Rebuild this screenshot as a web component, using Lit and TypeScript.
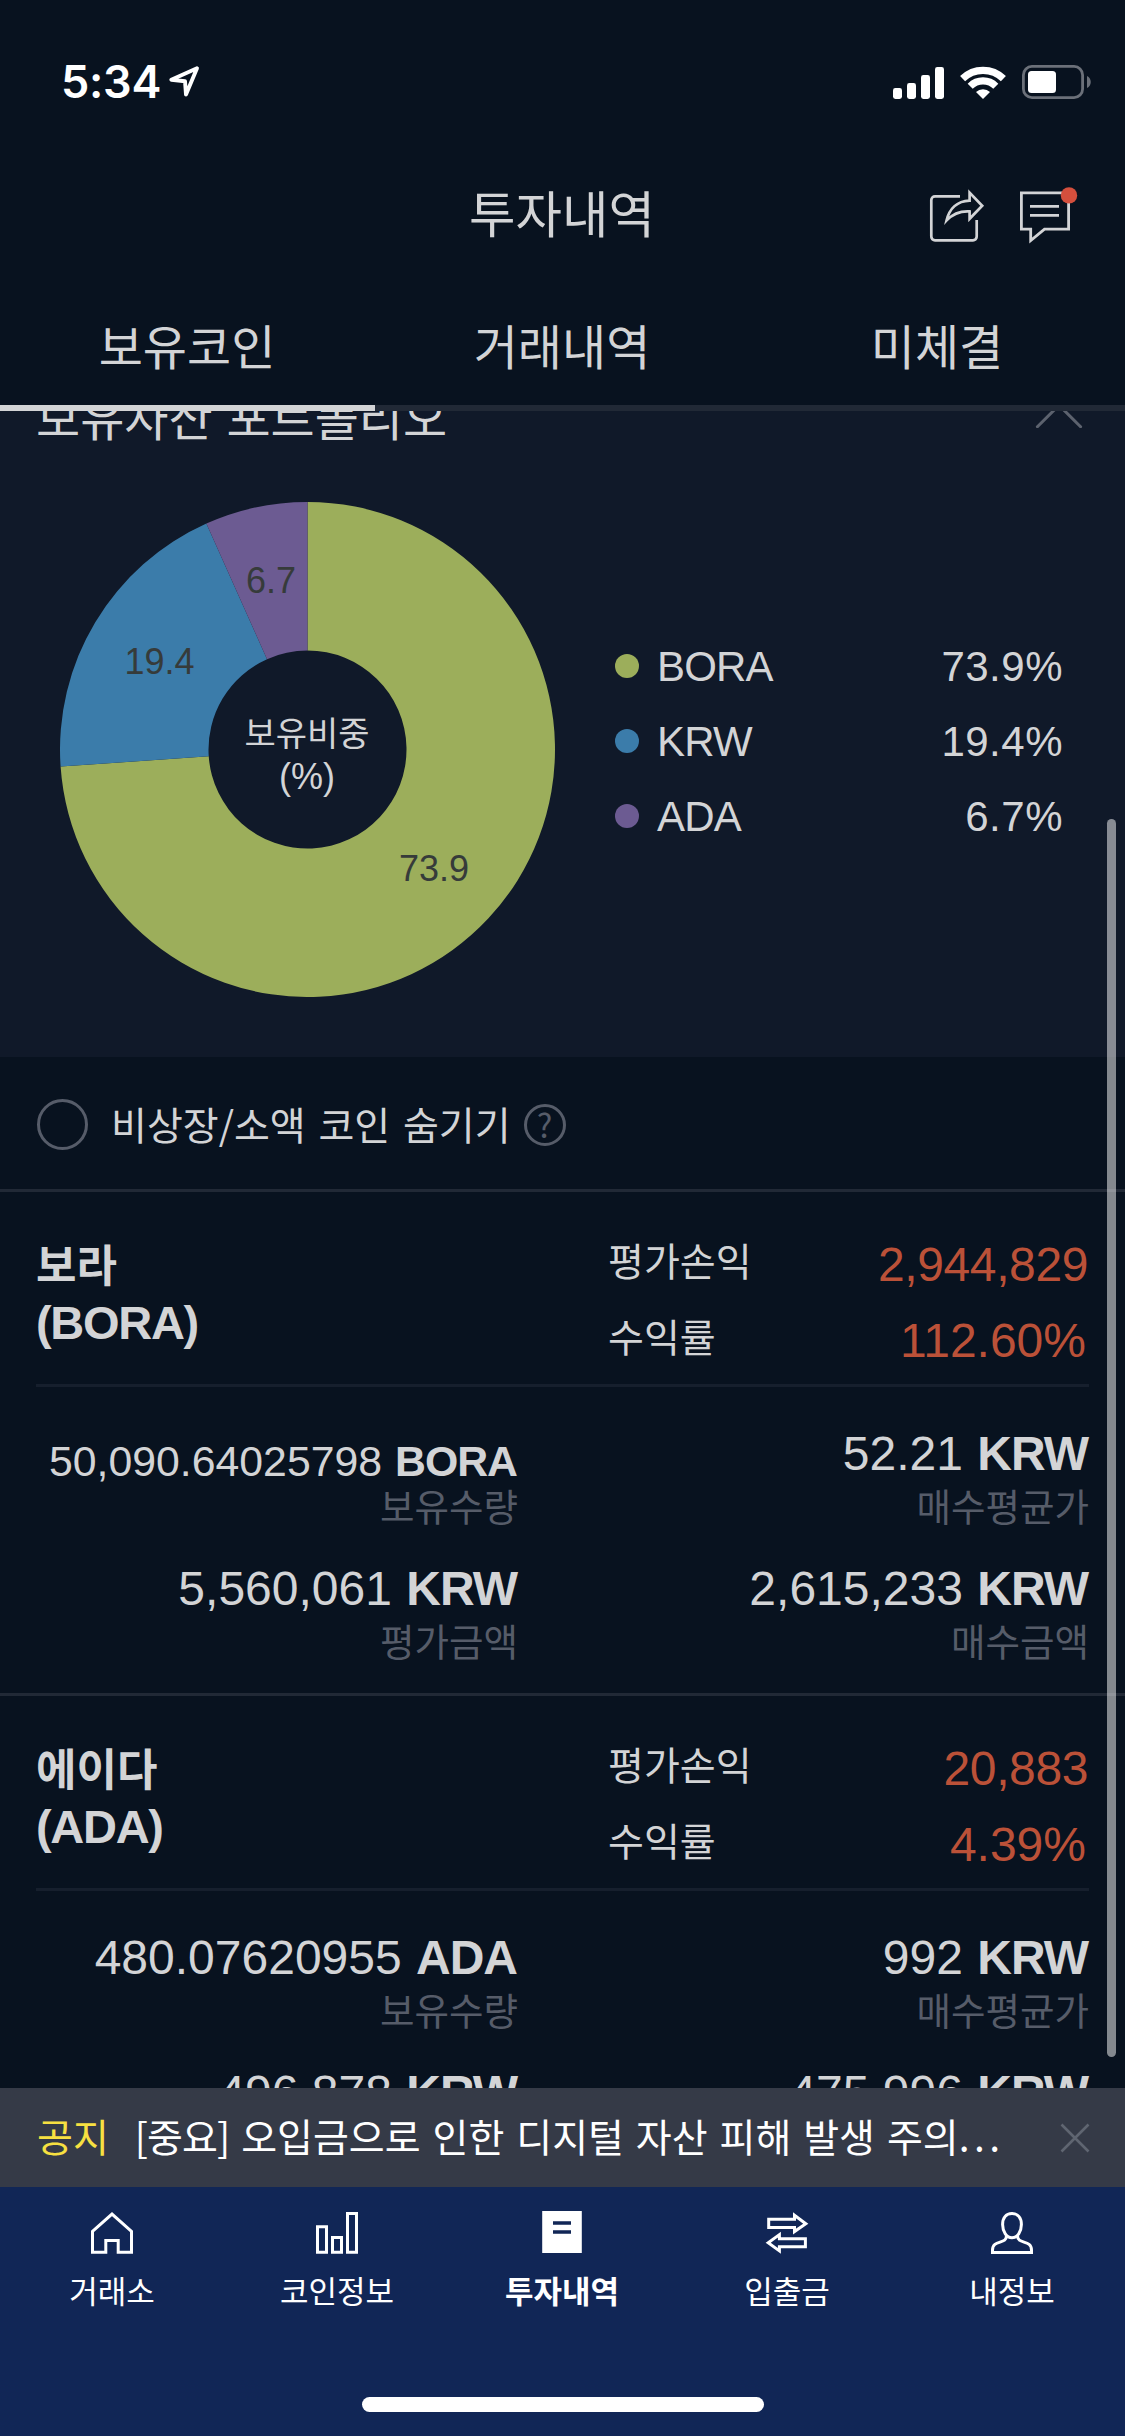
import { LitElement, html, css, svg, nothing } from "lit";
import { customElement, property } from "lit/decorators.js";
import { classMap } from "lit/directives/class-map.js";

interface Share {
  name: string;
  value: number;
  color: string;
  labelX: number;
  labelY: number;
}

interface Amount {
  value: string;
  unit: string;
  label: string;
  compact?: boolean;
}

interface Holding {
  name: string;
  symbol: string;
  profit: string;
  rate: string;
  amounts: Amount[];
}

const SHARES: Share[] = [
  { name: "BORA", value: 73.9, color: "#9cae5b", labelX: 374, labelY: 379 },
  { name: "KRW", value: 19.4, color: "#3b7caa", labelX: 99.5, labelY: 172 },
  { name: "ADA", value: 6.7, color: "#6c5b92", labelX: 211, labelY: 91 },
];

const HOLDINGS: Holding[] = [
  {
    name: "보라",
    symbol: "(BORA)",
    profit: "2,944,829",
    rate: "112.60%",
    amounts: [
      { value: "50,090.64025798", unit: "BORA", label: "보유수량", compact: true },
      { value: "52.21", unit: "KRW", label: "매수평균가" },
      { value: "5,560,061", unit: "KRW", label: "평가금액" },
      { value: "2,615,233", unit: "KRW", label: "매수금액" },
    ],
  },
  {
    name: "에이다",
    symbol: "(ADA)",
    profit: "20,883",
    rate: "4.39%",
    amounts: [
      { value: "480.07620955", unit: "ADA", label: "보유수량" },
      { value: "992", unit: "KRW", label: "매수평균가" },
      { value: "496,878", unit: "KRW", label: "평가금액" },
      { value: "475,996", unit: "KRW", label: "매수금액" },
    ],
  },
];

@customElement("status-bar")
class StatusBar extends LitElement {
  static styles = css`
    :host {
      display: flex;
      align-items: center;
      height: 100px;
      padding: 32px 33px 0 61px;
      color: #fff;
    }
    .time {
      font: 600 45px/60px Inter, "Liberation Sans", sans-serif;
      letter-spacing: -0.3px;
    }
    .arrow {
      margin-left: 6px;
    }
    .icons {
      display: flex;
      align-items: center;
      margin-left: auto;
    }
    .wifi {
      margin: 0 16px 0 16px;
    }
    svg {
      display: block;
    }
  `;

  render() {
    return html`
      <span class="time">5:34</span>
      <svg class="arrow" width="34" height="34" viewBox="0 0 34 34">
        <path d="M30 3.2L4.3 14.8 18 16.2 19 29.6Z" fill="none" stroke="#fff" stroke-width="3.9" stroke-linejoin="round" />
      </svg>
      <div class="icons">
        <svg width="51" height="33" viewBox="0 0 51 33" fill="#fff">
          <rect x="0" y="22" width="9" height="11" rx="2.4" />
          <rect x="14" y="17" width="9" height="16" rx="2.4" />
          <rect x="28" y="9" width="9" height="24" rx="2.4" />
          <rect x="42" y="1" width="9" height="32" rx="2.4" />
        </svg>
        <svg class="wifi" width="46" height="33" viewBox="0 0 46 33" fill="none" stroke="#fff" stroke-width="7.2">
          <path d="M2.6 12.6A29.2 29.2 0 0 1 43.4 12.6" />
          <path d="M10.2 20.2A18.2 18.2 0 0 1 35.8 20.2" />
          <path d="M23 33L16 26A10.2 10.2 0 0 1 30 26Z" fill="#fff" stroke="none" />
        </svg>
        <svg width="70" height="34" viewBox="0 0 70 34">
          <rect x="1.4" y="1.4" width="59.2" height="31.2" rx="8.5" fill="none" stroke="#6b7079" stroke-width="2.8" />
          <rect x="6" y="6" width="28" height="22" rx="3.5" fill="#fff" />
          <path d="M65 11C70 13 70 21 65 23Z" fill="#6b7079" />
        </svg>
      </div>
    `;
  }
}

@customElement("page-header")
class PageHeader extends LitElement {
  static styles = css`
    :host {
      display: block;
      color: #d3d4d6;
      font-family: "Noto Sans CJK KR", sans-serif;
    }
    .bar {
      display: grid;
      grid-template-columns: 1fr auto 1fr;
      align-items: center;
      height: 158px;
    }
    .title {
      grid-column: 2;
      font-size: 50.5px;
      line-height: 70px;
      margin-right: 1px;
    }
    .actions {
      display: flex;
      justify-content: flex-end;
      gap: 33px;
      padding: 10px 47px 0 0;
    }
    .tabs {
      display: grid;
      grid-template-columns: repeat(3, 1fr);
      height: 121px;
      font-size: 48px;
      line-height: 109px;
      text-align: center;
    }
    .tab {
      box-sizing: border-box;
      border-bottom: 6px solid #212936;
      padding-right: 1px;
    }
    .active {
      border-color: #d3d4d6;
    }
    svg {
      display: block;
    }
  `;

  render() {
    return html`
      <div class="bar">
        <div class="title">투자내역</div>
        <div class="actions">
          <svg width="56" height="60" viewBox="0 0 56 60" fill="none" stroke="#d3d4d6" stroke-width="2.7">
            <path d="M31 10.4H6A3.7 3.7 0 0 0 2.3 14.1V50.6A3.7 3.7 0 0 0 6 54.3H44A3.7 3.7 0 0 0 47.7 50.6V34" />
            <path d="M40.6 6.6L53.2 19.7 40.6 32.8V25.4C31 24.8 24 27.6 17.6 34.4 20.2 23.5 27.5 15 40.6 14.6Z" />
          </svg>
          <svg width="60" height="60" viewBox="0 0 60 60" fill="none" stroke="#d3d4d6" stroke-width="2.8">
            <path d="M3.4 6.8H50.6V43.2H26.5L12.7 54.6V43.2H3.4Z" />
            <path d="M12 20.4H41M12 29.4H41" />
            <circle cx="51" cy="9.4" r="8.2" fill="#d44f3d" stroke="none" />
          </svg>
        </div>
      </div>
      <div class="tabs">
        <div class="tab active">보유코인</div>
        <div class="tab">거래내역</div>
        <div class="tab">미체결</div>
      </div>
    `;
  }
}

@customElement("portfolio-panel")
class PortfolioPanel extends LitElement {
  static styles = css`
    :host {
      display: block;
      box-sizing: border-box;
      height: 672px;
      background: #101929;
      color: #d3d4d6;
      font-family: "Liberation Sans", "Noto Sans CJK KR", sans-serif;
    }
    .head {
      display: flex;
      align-items: center;
      justify-content: space-between;
      height: 60px;
      padding: 0 42px 0 36px;
    }
    .title {
      font-family: "Noto Sans CJK KR", sans-serif;
      font-size: 48px;
      line-height: 60px;
      word-spacing: 3px;
      white-space: nowrap;
    }
    .body {
      display: flex;
      padding: 57px 62px 0 60px;
    }
    .legend {
      flex: 1;
      padding: 126px 0 0 60px;
    }
    .row {
      display: flex;
      align-items: center;
      height: 75px;
      font-size: 42px;
      line-height: 50px;
    }
    .dot {
      width: 24px;
      height: 24px;
      border-radius: 50%;
      margin-right: 18px;
    }
    .name {
      flex: 1;
      padding-top: 2px;
      letter-spacing: -0.8px;
    }
    .share {
      padding-top: 2px;
      letter-spacing: 0.5px;
    }
    .slice-label {
      fill: #363b3a;
      font-size: 36px;
      text-anchor: middle;
    }
    .center {
      fill: #d3d4d6;
      font-size: 36px;
      text-anchor: middle;
    }
    .hangul {
      font-family: "Noto Sans CJK KR", sans-serif;
      font-size: 34px;
    }
  `;

  private slices() {
    const cx = 247.5;
    const outer = 247.5;
    const inner = 99;
    const point = (r: number, share: number) => {
      const a = share * 2 * Math.PI;
      return `${(cx + r * Math.sin(a)).toFixed(2)} ${(cx - r * Math.cos(a)).toFixed(2)}`;
    };
    let start = 0;
    return SHARES.map((s) => {
      const from = start;
      const to = start + s.value / 100;
      start = to;
      const large = s.value > 50 ? 1 : 0;
      return svg`<path fill=${s.color} d="M${point(outer, from)}A${outer} ${outer} 0 ${large} 1 ${point(outer, to)}L${point(inner, to)}A${inner} ${inner} 0 ${large} 0 ${point(inner, from)}Z" />`;
    });
  }

  render() {
    return html`
      <div class="head">
        <span class="title">보유자산 포트폴리오</span>
        <svg width="48" height="26" viewBox="0 0 48 26">
          <path d="M2.4 24.8L24 3.2 45.6 24.8" fill="none" stroke="#5c626e" stroke-width="3" stroke-linecap="round" />
        </svg>
      </div>
      <div class="body">
        <svg width="495" height="495" viewBox="0 0 495 495">
          ${this.slices()}
          ${SHARES.map((s) => svg`<text class="slice-label" x=${s.labelX} y=${s.labelY}>${s.value}</text>`)}
          <text class="center hangul" x="247" y="244">보유비중</text>
          <text class="center" x="247" y="286.5">(%)</text>
        </svg>
        <div class="legend">
          ${SHARES.map(
            (s) => html`<div class="row">
              <span class="dot" style="background:${s.color}"></span>
              <span class="name">${s.name}</span>
              <span class="share">${s.value}%</span>
            </div>`
          )}
        </div>
      </div>
    `;
  }
}

@customElement("holding-card")
class HoldingCard extends LitElement {
  @property({ attribute: false }) holding?: Holding;

  static styles = css`
    :host {
      display: block;
      box-sizing: border-box;
      height: 504px;
      padding: 0 36px;
      border-bottom: 3px solid #212936;
      color: #d3d4d6;
      font-family: "Liberation Sans", "Noto Sans CJK KR", sans-serif;
    }
    .head {
      display: grid;
      grid-template-columns: 572px 1fr;
      box-sizing: border-box;
      height: 195px;
      padding-top: 35px;
      border-bottom: 3px solid #161f2d;
    }
    .name {
      padding-top: 6px;
      font-weight: 700;
      line-height: 60px;
    }
    .korean {
      font-family: "Noto Sans CJK KR", sans-serif;
      font-size: 44px;
    }
    .symbol {
      font-size: 47px;
      letter-spacing: -1.3px;
    }
    .stat {
      display: flex;
      justify-content: space-between;
      height: 76px;
    }
    .stat-label {
      font: 39px/64px "Noto Sans CJK KR", sans-serif;
    }
    .stat-value {
      font-size: 48px;
      line-height: 76px;
      color: #bb5138;
    }
    .profit {
      padding-right: 1px;
      letter-spacing: -0.4px;
    }
    .rate {
      padding-right: 3px;
    }
    .amounts {
      display: grid;
      grid-template-columns: 482px 1fr;
      row-gap: 30px;
      padding-top: 38px;
      text-align: right;
      white-space: nowrap;
    }
    .value {
      height: 56px;
      padding-right: 1px;
      font-size: 48px;
      line-height: 58px;
      word-spacing: 1px;
    }
    .unit {
      letter-spacing: -1px;
    }
    .compact {
      font-size: 42.8px;
      line-height: 72px;
    }
    .label {
      font: 37.5px/48px "Noto Sans CJK KR", sans-serif;
      height: 49px;
      color: #565c69;
    }
  `;

  render() {
    const h = this.holding;
    if (!h) return nothing;
    return html`
      <div class="head">
        <div class="name">
          <div class="korean">${h.name}</div>
          <div class="symbol">${h.symbol}</div>
        </div>
        <div>
          <div class="stat"><span class="stat-label">평가손익</span><span class="stat-value profit">${h.profit}</span></div>
          <div class="stat"><span class="stat-label">수익률</span><span class="stat-value rate">${h.rate}</span></div>
        </div>
      </div>
      <div class="amounts">
        ${h.amounts.map(
          (a) => html`<div>
            <div class=${classMap({ value: true, compact: !!a.compact })}>${a.value} <b class="unit">${a.unit}</b></div>
            <div class="label">${a.label}</div>
          </div>`
        )}
      </div>
    `;
  }
}

@customElement("notice-bar")
class NoticeBar extends LitElement {
  static styles = css`
    :host {
      display: flex;
      align-items: center;
      box-sizing: border-box;
      height: 99px;
      padding: 0 35px 0 37px;
      background: #353a47;
      color: #fff;
      font: 39px/94px "Noto Sans CJK KR", sans-serif;
      white-space: nowrap;
    }
    .tag {
      color: #f7e041;
      margin-right: 26px;
      padding-bottom: 5px;
    }
    .text {
      flex: 1;
      padding-bottom: 5px;
      word-spacing: 3.2px;
    }
    .mark {
      letter-spacing: -0.9px;
    }
    .dots {
      letter-spacing: 4.4px;
    }
  `;

  render() {
    return html`
      <span class="tag">공지</span>
      <span class="text"
        ><span class="mark">[중요]</span> 오입금으로 인한 디지털 자산 피해 발생 주의<span class="dots">...</span></span
      >
      <svg width="30" height="30" viewBox="0 0 30 30">
        <path d="M1.5 1.5L28.5 28.5M28.5 1.5L1.5 28.5" stroke="#5f6571" stroke-width="2.6" />
      </svg>
    `;
  }
}

@customElement("tab-bar")
class TabBar extends LitElement {
  static styles = css`
    :host {
      display: flex;
      flex-direction: column;
      align-items: center;
      box-sizing: border-box;
      height: 249px;
      background: #112656;
      color: #fff;
      font: 31px/40px "Noto Sans CJK KR", sans-serif;
    }
    .items {
      display: grid;
      grid-template-columns: repeat(5, 225px);
      height: 210px;
      padding-top: 25px;
      box-sizing: border-box;
    }
    .item {
      display: flex;
      flex-direction: column;
      align-items: center;
      gap: 16px;
      padding-right: 1px;
    }
    .current {
      font-weight: 700;
    }
    .home {
      width: 402px;
      height: 15px;
      border-radius: 8px;
      background: #fff;
    }
    svg {
      display: block;
      overflow: visible;
      fill: none;
      stroke: #fff;
      stroke-width: 3;
    }
    .solid {
      fill: #fff;
      stroke: none;
    }
    .cut {
      stroke: #112656;
      stroke-width: 3.4;
    }
  `;

  render() {
    return html`
      <div class="items">
        <div class="item">
          <svg width="42" height="42" viewBox="0 0 42 42">
            <path d="M1.5 19.4L21 2.1 40.5 19.4V40.3H27.2V28.6H14.8V40.3H1.5Z" />
          </svg>
          <span>거래소</span>
        </div>
        <div class="item">
          <svg width="42" height="42" viewBox="0 0 42 42">
            <path d="M1.5 14.8H10.5V40.3H1.5ZM16.5 25.6H25.5V40.3H16.5ZM31.5 1.6H40.5V40.3H31.5Z" />
          </svg>
          <span>코인정보</span>
        </div>
        <div class="item current">
          <svg width="42" height="42" viewBox="0 0 42 42">
            <path class="solid" d="M1.2-1H40.8V41H1.2Z" />
            <path class="cut" d="M12 11H30M12 20H30" />
          </svg>
          <span>투자내역</span>
        </div>
        <div class="item">
          <svg width="42" height="42" viewBox="0 0 42 42">
            <path d="M2.7 7.3H28.5V3.3L39.8 11.7 28.5 19.6V15.5H2.7Z" />
            <path d="M39.4 26.8H13.4V22.6L2.2 30.7 13.4 38.9V34.8H39.4Z" />
          </svg>
          <span>입출금</span>
        </div>
        <div class="item">
          <svg width="42" height="42" viewBox="0 0 42 42">
            <path d="M21 1.6C14.8 1.6 11.6 6 11.6 12.6 11.6 19.6 15.6 25.8 21 25.8 26.4 25.8 30.4 19.6 30.4 12.6 30.4 6 27.2 1.6 21 1.6Z" />
            <path d="M15.4 23.5C16 33 1.5 27 1.5 38V40.4H40.5V38C40.5 27 26 33 26.6 23.5" />
          </svg>
          <span>내정보</span>
        </div>
      </div>
      <div class="home"></div>
    `;
  }
}

@customElement("app-root")
class AppRoot extends LitElement {
  static styles = css`
    :host {
      display: flex;
      flex-direction: column;
      width: 1125px;
      height: 2436px;
      overflow: hidden;
      background: #08121f;
    }
    .scroller {
      position: relative;
      height: 1677px;
      overflow: hidden;
    }
    .content {
      margin-top: -26px;
    }
    .thumb {
      position: absolute;
      top: 408px;
      right: 9px;
      width: 9px;
      height: 1238px;
      border-radius: 5px;
      background: rgba(255, 255, 255, 0.5);
    }
    .filter {
      display: flex;
      align-items: center;
      box-sizing: border-box;
      height: 135px;
      padding: 0 37px;
      border-bottom: 3px solid #212936;
      color: #d3d4d6;
      font: 39px/131px "Noto Sans CJK KR", "Liberation Sans", sans-serif;
      word-spacing: 4px;
    }
    .check {
      box-sizing: border-box;
      width: 51px;
      height: 51px;
      margin: 3px 23px 0 0;
      border: 3px solid #565c69;
      border-radius: 50%;
    }
    .help {
      box-sizing: border-box;
      width: 42px;
      height: 42px;
      margin: 3px 0 0 13px;
      border: 3px solid #565c69;
      border-radius: 50%;
      color: #565c69;
      font: 33px/35px "Noto Sans CJK KR", sans-serif;
      text-align: center;
    }
  `;

  render() {
    return html`
      <status-bar></status-bar>
      <page-header></page-header>
      <main class="scroller">
        <div class="content">
          <portfolio-panel></portfolio-panel>
          <div class="filter">
            <span class="check"></span>
            <span>비상장/소액 코인 숨기기</span>
            <span class="help">?</span>
          </div>
          ${HOLDINGS.map((h) => html`<holding-card .holding=${h}></holding-card>`)}
        </div>
        <div class="thumb"></div>
      </main>
      <notice-bar></notice-bar>
      <tab-bar></tab-bar>
    `;
  }
}
